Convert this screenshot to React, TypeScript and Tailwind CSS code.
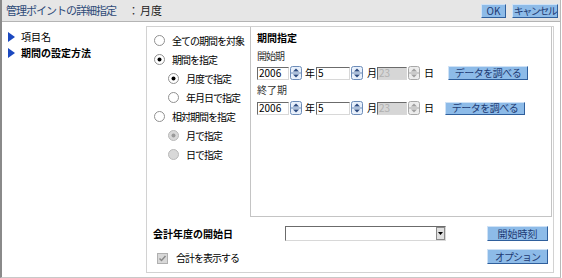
import React from "react";

const font = { fontFamily: '"Noto Sans CJK JP", "Noto Sans", sans-serif' };

function Btn({ label, className }: { label: string; className?: string }) {
  return (
    <div
      className={
        "flex items-center justify-center overflow-hidden whitespace-nowrap border border-t-[#cfe2f6] border-l-[#cfe2f6] border-r-[#2f5f9c] border-b-[#2f5f9c] bg-[#8dbbe8] text-[10px] leading-none text-[#1d3a73] " +
        (className ?? "")
      }
    >
      {label}
    </div>
  );
}

function Spin({ disabled }: { disabled?: boolean }) {
  const stroke = disabled ? "#a8a8a8" : "#6d8cb8";
  const fill = disabled ? "#a0a0a0" : "#2c4a80";
  return (
    <svg width="12" height="14" viewBox="0 0 12 14" className="shrink-0">
      <rect x="0.5" y="0.5" width="11" height="13" rx="2" fill={disabled ? "#ececec" : "#e8f0fb"} stroke={stroke} />
      <line x1="1" y1="7" x2="11" y2="7" stroke={stroke} />
      <path d="M3 5.5 L6 2.5 L9 5.5 Z" fill={fill} />
      <path d="M3 8.5 L6 11.5 L9 8.5 Z" fill={fill} />
    </svg>
  );
}

function Field({ value, w, disabled }: { value: string; w: string; disabled?: boolean }) {
  return (
    <div
      className={
        "flex h-[13px] items-center border border-t-[#6b6b6b] border-l-[#6b6b6b] border-r-[#d8d8d8] border-b-[#d8d8d8] pl-[1px] text-[10px] leading-none " +
        w +
        (disabled ? " bg-[#d6d6d6] text-[#b0b0b0]" : " bg-white text-black")
      }
    >
      {value}
    </div>
  );
}

function Radio({ checked, disabled }: { checked?: boolean; disabled?: boolean }) {
  return (
    <svg width="11" height="11" viewBox="0 0 11 11" className="shrink-0">
      <circle cx="5.5" cy="5.5" r="5" fill={disabled ? "#d8d8d8" : "#ffffff"} stroke={disabled ? "#b8b8b8" : "#909090"} />
      {checked && <circle cx="5.5" cy="5.5" r="2" fill={disabled ? "#9a9a9a" : "#000000"} />}
    </svg>
  );
}

function RadioRow({
  label,
  checked,
  disabled,
  indent,
}: {
  label: string;
  checked?: boolean;
  disabled?: boolean;
  indent?: boolean;
}) {
  return (
    <div className={"flex h-[19px] items-center " + (indent ? "pl-[21px] gap-[7px]" : "pl-[7px] gap-[7px]")}>
      <Radio checked={checked} disabled={disabled} />
      <span className="text-[10px] leading-none tracking-[-1px] text-black">{label}</span>
    </div>
  );
}

function DateRow({ btnClass }: { btnClass: string }) {
  return (
    <div className="flex items-center">
      <Field value="2006" w="w-[32px]" />
      <div className="ml-[1px]">
        <Spin />
      </div>
      <span className="ml-[3px] w-[10px] text-[10px] leading-none">年</span>
      <div className="ml-[1px]">
        <Field value="5" w="w-[34px]" />
      </div>
      <div className="ml-[1px]">
        <Spin />
      </div>
      <span className="ml-[4px] w-[10px] text-[10px] leading-none">月</span>
      <div className="ml-[0px]">
        <Field value="23" w="w-[30px]" disabled />
      </div>
      <div className="ml-[1px]">
        <Spin disabled />
      </div>
      <span className="ml-[4px] text-[10px] leading-none">日</span>
      <Btn label="データを調べる" className={btnClass} />
    </div>
  );
}

export default function App() {
  return (
    <div style={font} className="h-[278px] w-[562px] bg-white">
      <div className="flex h-[278px] w-[561px] flex-col border-l-2 border-r border-b border-l-[#8a8a8a] border-r-[#b8b8b8] border-b-[#c8c8c8]">
        <div className="flex h-[22px] shrink-0 items-center justify-between border-b border-[#b4b4b4] bg-[#e6e6e6] pl-[4px] pr-[2px]">
          <div className="flex items-center text-[11px] leading-none">
            <span className="tracking-[-1px] text-[#2e4a78]">管理ポイントの詳細指定</span>
            <span className="ml-[12px] text-[#333]">：</span>
            <span className="ml-[1px] text-[#222]">月度</span>
          </div>
          <div className="flex gap-[6px]">
            <Btn label="OK" className="h-[14px] w-[25px]" />
            <Btn label="キャンセル" className="h-[14px] w-[46px] text-[9px] tracking-[-1.5px]" />
          </div>
        </div>

        <div className="flex pt-[4px]">
          <div className="w-[144px] pl-[6px] pt-[3px]">
            <div className="flex h-[16px] items-center gap-[6px]">
              <svg width="7" height="10" viewBox="0 0 7 10">
                <path d="M0 0 L7 5 L0 10 Z" fill="#1b49c0" />
              </svg>
              <span className="text-[10px] leading-none">項目名</span>
            </div>
            <div className="flex h-[16px] items-center gap-[6px]">
              <svg width="7" height="10" viewBox="0 0 7 10">
                <path d="M0 0 L7 5 L0 10 Z" fill="#1b49c0" />
              </svg>
              <span className="text-[10px] font-bold leading-none">期間の設定方法</span>
            </div>
          </div>

          <div className="flex h-[247px] w-[408px] flex-col border border-[#d2d2d2]">
            <div className="flex">
              <div className="w-[103px] pt-[4px]">
                <RadioRow label="全ての期間を対象" />
                <RadioRow label="期間を指定" checked />
                <RadioRow label="月度で指定" checked indent />
                <RadioRow label="年月日で指定" indent />
                <RadioRow label="相対期間を指定" />
                <RadioRow label="月で指定" checked disabled indent />
                <RadioRow label="日で指定" disabled indent />
              </div>
              <div className="h-[190px] w-[302px] border-l border-r border-b border-[#c4c4c4] pl-[6px] pt-[6px]">
                <div className="text-[10px] font-bold leading-none">期間指定</div>
                <div className="mt-[8px] text-[10px] leading-none tracking-[-1px] text-[#333]">開始期</div>
                <div className="mt-[5px]">
                  <DateRow btnClass="ml-[14px] h-[14px] w-[80px] tracking-[-0.5px]" />
                </div>
                <div className="mt-[5px] text-[10px] leading-none text-[#333]">終了期</div>
                <div className="mt-[6px]">
                  <DateRow btnClass="ml-[11px] h-[13px] w-[80px] tracking-[-0.5px]" />
                </div>
              </div>
            </div>

            <div className="flex items-center pl-[6px] pt-[9px]">
              <span className="w-[132px] text-[10px] font-bold leading-none">会計年度の開始日</span>
              <div className="flex h-[15px] w-[161px] border border-t-[#6b6b6b] border-l-[#6b6b6b] border-r-[#d8d8d8] border-b-[#d8d8d8] bg-white">
                <div className="flex-1" />
                <div className="flex w-[9px] items-center justify-center border border-[#8a8a8a] bg-[#e0e0e0]">
                  <svg width="5" height="3" viewBox="0 0 5 3">
                    <path d="M0 0 L5 0 L2.5 3 Z" fill="#000" />
                  </svg>
                </div>
              </div>
              <Btn label="開始時刻" className="ml-[41px] h-[15px] w-[61px]" />
            </div>

            <div className="flex items-center pt-[8px]">
              <div className="flex w-[340px] items-center gap-[8px] pl-[10px] pt-[3px]">
                <svg width="11" height="11" viewBox="0 0 11 11">
                  <rect x="0.5" y="0.5" width="10" height="10" fill="#d8d8d8" stroke="#b0b0b0" />
                  <path d="M2.5 5.5 L4.5 7.5 L8.5 3" stroke="#8a8a8a" strokeWidth="1.5" fill="none" />
                </svg>
                <span className="text-[10px] leading-none tracking-[-1px] text-black">合計を表示する</span>
              </div>
              <Btn label="オプション" className="h-[15px] w-[61px] tracking-[-1px]" />
            </div>
          </div>
        </div>
      </div>
    </div>
  );
}
